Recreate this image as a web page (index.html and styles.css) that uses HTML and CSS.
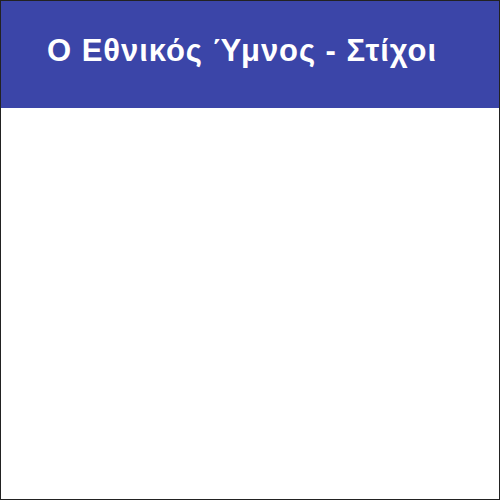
FILE: index.html
```html
<!DOCTYPE html>
<html lang="el">
<head>
<meta charset="utf-8">
<link rel="stylesheet" href="styles.css">
</head>
<body>
<div class="frame">
  <header class="bar">
    <h1 class="title">Ο Εθνικός Ύμνος - Στίχοι</h1>
  </header>
  <main class="content"></main>
</div>
</body>
</html>
```

FILE: styles.css
```css
html, body {
  margin: 0;
  padding: 0;
  background: #ffffff;
}
.frame {
  box-sizing: border-box;
  width: 500px;
  height: 500px;
  border: 1px solid #222222;
  display: flex;
  flex-direction: column;
}
.bar {
  height: 107px;
  background: #3b45a8;
  display: flex;
  align-items: flex-start;
  padding: 0 0 0 46px;
  box-sizing: border-box;
}
.title {
  margin: 0;
  padding-top: 34px;
  font-family: "Liberation Sans", Arial, sans-serif;
  font-weight: bold;
  font-size: 31px;
  line-height: 32px;
  letter-spacing: 0.95px;
  color: #ffffff;
}
.content {
  flex: 1;
  background: #ffffff;
}
```
